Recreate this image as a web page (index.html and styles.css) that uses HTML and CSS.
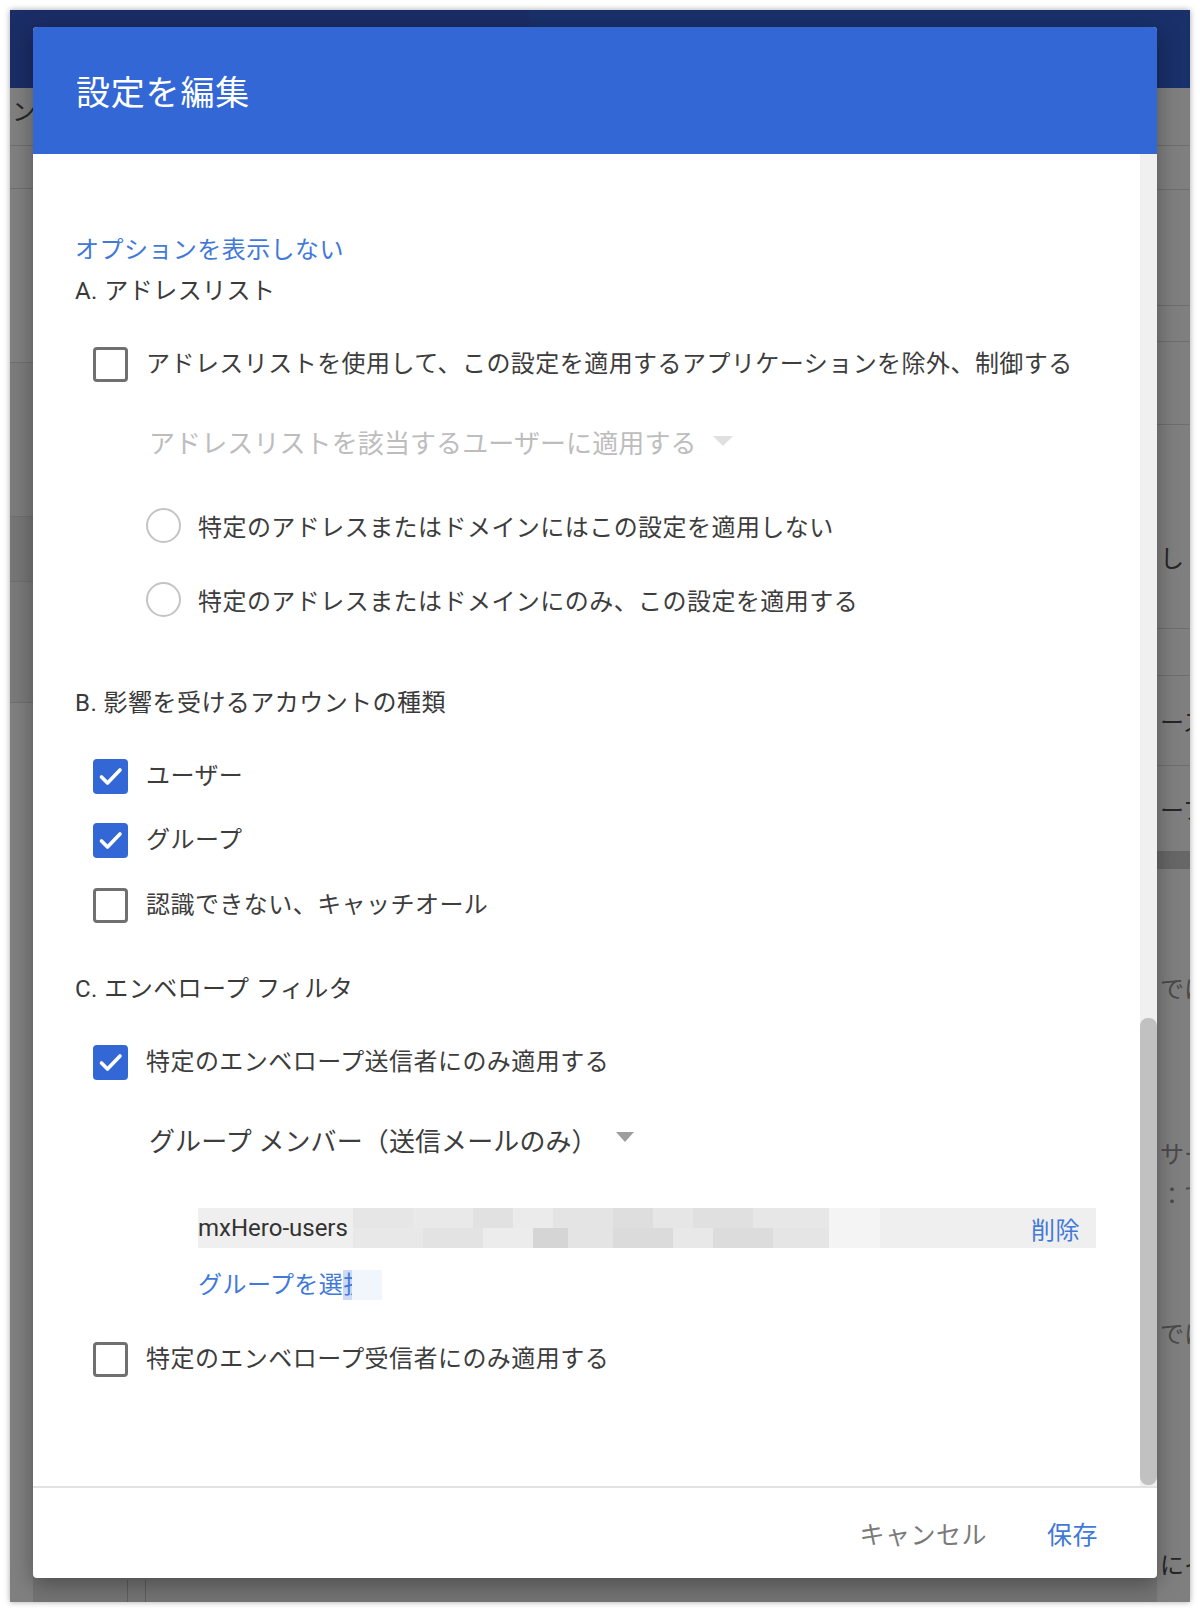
FILE: index.html
```html
<!DOCTYPE html>
<html lang="ja">
<head>
<meta charset="utf-8">
<title>設定を編集</title>
<link rel="stylesheet" href="styles.css">
</head>
<body>
<div class="frame">
  <div class="backdrop">
    <div class="topbar"><div class="tb-left"></div><div class="tb-right"></div></div>
    <div class="bd-main">
      <div class="strip strip-left">
        <div class="cell l1"><span class="bgtext">ン</span></div>
        <div class="cell l2"></div>
        <div class="cell l3"></div>
        <div class="cell l4"></div>
        <div class="cell l5"></div>
        <div class="cell l6"></div>
      </div>
      <div class="bd-mid">
        <div class="dbl"></div>
      </div>
      <div class="strip strip-right">
        <div class="cell r1 line"></div>
        <div class="cell r2 line"></div>
        <div class="cell r3 line"></div>
        <div class="cell r4 line"></div>
        <div class="cell r5 line"></div>
        <div class="cell r6"></div>
        <div class="cell r7"><span class="bgtext">し：</span></div>
        <div class="cell r8 line"></div>
        <div class="cell r9 line"></div>
        <div class="cell r10 line"><span class="bgtext">ース</span></div>
        <div class="cell r11"><span class="bgtext">ーフ</span></div>
        <div class="cell r12 dark"></div>
        <div class="cell r13"></div>
        <div class="cell r14"><span class="bgtext faint">でに</span></div>
        <div class="cell r15"></div>
        <div class="cell r16"><span class="bgtext faint">サー</span></div>
        <div class="cell r17"><span class="bgtext faint">：で</span></div>
        <div class="cell r18"></div>
        <div class="cell r19"><span class="bgtext faint">でに</span></div>
        <div class="cell r20"></div>
        <div class="cell r21"><span class="bgtext">にイ</span></div>
      </div>
    </div>
  </div>

  <div class="dialog">
    <header class="dlg-head"><h1>設定を編集</h1></header>
    <div class="dlg-body">
      <div class="dlg-content">
        <a class="link row-line">オプションを表示しない</a>
        <div class="heading row-line m1">A. アドレスリスト</div>

        <div class="cb-row row-line m33">
          <span class="cb"></span>
          <span class="label">アドレスリストを使用して、この設定を適用するアプリケーションを除外、制御する</span>
        </div>

        <div class="select disabled row-line m40">
          <span>アドレスリストを該当するユーザーに適用する</span><span class="caret"></span>
        </div>

        <div class="radio-row row-line m44">
          <span class="radio"></span>
          <span class="label">特定のアドレスまたはドメインにはこの設定を適用しない</span>
        </div>
        <div class="radio-row row-line m34">
          <span class="radio"></span>
          <span class="label">特定のアドレスまたはドメインにのみ、この設定を適用する</span>
        </div>

        <div class="heading row-line m61">B. 影響を受けるアカウントの種類</div>

        <div class="cb-row row-line m33">
          <span class="cb checked"><svg viewBox="0 0 35 35" width="35" height="35"><path d="M8.5 18 L14.5 24 L27 11" fill="none" stroke="#fff" stroke-width="3.6" stroke-linecap="round" stroke-linejoin="round"/></svg></span>
          <span class="label">ユーザー</span>
        </div>
        <div class="cb-row row-line m24">
          <span class="cb checked"><svg viewBox="0 0 35 35" width="35" height="35"><path d="M8.5 18 L14.5 24 L27 11" fill="none" stroke="#fff" stroke-width="3.6" stroke-linecap="round" stroke-linejoin="round"/></svg></span>
          <span class="label">グループ</span>
        </div>
        <div class="cb-row row-line m25">
          <span class="cb"></span>
          <span class="label">認識できない、キャッチオール</span>
        </div>

        <div class="heading row-line m44">C. エンベロープ フィルタ</div>

        <div class="cb-row row-line m33">
          <span class="cb checked"><svg viewBox="0 0 35 35" width="35" height="35"><path d="M8.5 18 L14.5 24 L27 11" fill="none" stroke="#fff" stroke-width="3.6" stroke-linecap="round" stroke-linejoin="round"/></svg></span>
          <span class="label">特定のエンベロープ送信者にのみ適用する</span>
        </div>

        <div class="select row-line m40">
          <span>グループ メンバー（送信メールのみ）</span><span class="caret dark-caret"></span>
        </div>

        <div class="group-row m46">
          <span class="group-name">mxHero-users</span>
          <span class="redact"></span>
          <span class="redact-light"></span>
          <span class="grow"></span>
          <a class="link remove">削除</a>
        </div>

        <a class="link pick row-line m17">グループを選<span class="sel-clip">択</span><span class="sel-pale"></span></a>

        <div class="cb-row row-line m34">
          <span class="cb"></span>
          <span class="label">特定のエンベロープ受信者にのみ適用する</span>
        </div>
      </div>
      <div class="scroll-track"><div class="scroll-thumb"></div></div>
    </div>
    <footer class="dlg-foot">
      <button class="btn cancel">キャンセル</button>
      <button class="btn save">保存</button>
    </footer>
  </div>
</div>
</body>
</html>
```

FILE: styles.css
```css
* { box-sizing: border-box; }

html, body {
  margin: 0;
  padding: 0;
  background: #ffffff;
}

body {
  font-family: "Roboto", "Noto Sans CJK JP", sans-serif;
  width: 1200px;
  height: 1612px;
  overflow: hidden;
}

.frame {
  position: relative;
  width: 1180px;
  height: 1592px;
  margin: 10px 0 0 10px;
  overflow: hidden;
  box-shadow: 0 0 6px rgba(0, 0, 0, 0.35);
}

/* ---------- dimmed backdrop ---------- */
.backdrop {
  display: flex;
  flex-direction: column;
  height: 100%;
  background: #7e7e7e;
}

.topbar {
  display: flex;
  height: 78px;
}
.tb-left { width: 520px; background: #1b2d66; }
.tb-right { flex: 1; background: #19306a; }

.bd-main {
  flex: 1;
  display: flex;
}

.strip {
  display: flex;
  flex-direction: column;
  overflow: hidden;
}
.strip-left { width: 23px; background: #808080; }
.strip-right { width: 33px; background: #7f7f7f; }

.bd-mid {
  flex: 1;
  display: flex;
  flex-direction: column;
  justify-content: flex-end;
  background: #747474;
}

.dbl {
  width: 19px;
  height: 22px;
  margin-left: 94px;
  border-left: 1px solid #5e5e5e;
  border-right: 1px solid #5e5e5e;
}

.cell {
  display: flex;
  align-items: center;
  flex-shrink: 0;
  white-space: nowrap;
}
.strip-left .cell { border-bottom: 1px solid #6f6f6f; }
.cell.line { border-bottom: 1px solid #6e6e6e; }
.cell.dark { background: #676767; }

.l1 { height: 58px; align-items: flex-start; }
.l1 .bgtext { line-height: 44px; padding-left: 2px; }
.l2 { height: 43px; }
.l3 { height: 174px; }
.l4 { height: 154px; background: #7c7c7c; }
.l5 { height: 65px; background: #767676; }
.l6 { height: 121px; background: #7a7a7a; }

.r1 { height: 58px; }
.r2 { height: 44px; }
.r3 { height: 116px; }
.r4 { height: 36px; }
.r5 { height: 83px; }
.r6 { height: 95px; }
.r7 { height: 72px; }
.r8 { height: 37px; }
.r9 { height: 47px; }
.r10 { height: 90px; }
.r11 { height: 85px; }
.r12 { height: 18px; }
.r13 { height: 91px; }
.r14 { height: 54px; }
.r15 { height: 116px; }
.r16 { height: 44px; }
.r17 { height: 38px; }
.r18 { height: 98px; }
.r19 { height: 44px; }
.r20 { height: 186px; }
.r21 { height: 46px; }

.strip-right .bgtext { padding-left: 3px; }

.bgtext {
  font-size: 24px;
  color: #262626;
  font-family: "Noto Sans CJK JP", sans-serif;
}
.bgtext.faint { color: #4a4a4a; }

/* ---------- dialog ---------- */
.dialog {
  position: absolute;
  left: 23px;
  top: 17px;
  width: 1124px;
  height: 1551px;
  background: #ffffff;
  border-radius: 4px;
  overflow: hidden;
  display: flex;
  flex-direction: column;
  box-shadow: 0 6px 22px rgba(0, 0, 0, 0.35);
}

.dlg-head {
  height: 127px;
  flex-shrink: 0;
  background: #3367d6;
  display: flex;
  align-items: center;
  padding-left: 43px;
}
.dlg-head h1 {
  margin: 0;
  font-size: 34px;
  font-weight: 400;
  color: #ffffff;
  letter-spacing: 0.8px;
  font-family: "Noto Sans CJK JP", sans-serif;
}

.dlg-body {
  flex: 1;
  display: flex;
  min-height: 0;
}

.dlg-content {
  flex: 1;
  padding: 76px 44px 0 42px;
  display: flex;
  flex-direction: column;
  align-items: flex-start;
  font-size: 24px;
  letter-spacing: 0.45px;
  color: #3d3d3d;
}

.row-line {
  height: 40px;
  line-height: 40px;
  display: flex;
  align-items: center;
  white-space: nowrap;
}

.m1 { margin-top: 1px; }
.m17 { margin-top: 17px; }
.m24 { margin-top: 24px; }
.m25 { margin-top: 25px; }
.m33 { margin-top: 33px; }
.m34 { margin-top: 34px; }
.m40 { margin-top: 40px; }
.m44 { margin-top: 44px; }
.m46 { margin-top: 46px; }
.m61 { margin-top: 61px; }

.link {
  color: #4179d8;
  text-decoration: none;
  cursor: pointer;
}

.heading { color: #3a3a3a; }

.cb-row { padding-left: 18px; }
.cb {
  width: 35px;
  height: 35px;
  flex-shrink: 0;
  border: 3px solid #707070;
  border-radius: 4px;
  margin-right: 18px;
  display: flex;
  align-items: center;
  justify-content: center;
}
.cb.checked {
  border: none;
  background: #3367d6;
}
.cb svg { display: block; }

.radio-row { padding-left: 71px; }
.radio {
  width: 35px;
  height: 35px;
  flex-shrink: 0;
  border: 2px solid #c4c4c4;
  border-radius: 50%;
  margin-right: 17px;
  margin-top: -5px;
}

.select {
  padding-left: 74px;
  color: #3d3d3d;
  font-size: 26px;
  letter-spacing: 0.1px;
}
.select.disabled { color: #bdbdbd; }
.caret {
  width: 0;
  height: 0;
  border-left: 10px solid transparent;
  border-right: 10px solid transparent;
  border-top: 10px solid #e0e0e0;
  margin-left: 16px;
  margin-bottom: 6px;
}
.caret.dark-caret {
  border-left-width: 9px;
  border-right-width: 9px;
  border-top-color: #9e9e9e;
  margin-left: 18px;
  margin-bottom: 10px;
}

.group-row {
  align-self: stretch;
  margin-left: 123px;
  height: 40px;
  background: #efefef;
  display: flex;
  align-items: center;
}
.group-name {
  font-family: "Roboto", sans-serif;
  letter-spacing: 0;
  color: #333333;
  font-size: 24px;
  width: 155px;
  white-space: nowrap;
}
.redact {
  width: 476px;
  height: 40px;
  background:
    linear-gradient(to right,
      #e6e6e6 0 60px, #e9e9e9 60px 120px, #e1e1e1 120px 160px, #ebebeb 160px 200px,
      #e4e4e4 200px 260px, #dedede 260px 300px, #e6e6e6 300px 340px, #e0e0e0 340px 400px,
      #e7e7e7 400px 476px) top left / 100% 50% no-repeat,
    linear-gradient(to right,
      #e8e8e8 0 70px, #e3e3e3 70px 130px, #ececec 130px 180px, #d5d5d5 180px 215px,
      #e4e4e4 215px 260px, #dbdbdb 260px 320px, #e8e8e8 320px 360px, #dcdcdc 360px 420px,
      #e5e5e5 420px 476px) bottom left / 100% 50% no-repeat;
}
.redact-light {
  width: 51px;
  height: 40px;
  background: #f4f4f4;
}
.grow { flex: 1; }
.remove {
  padding-right: 16px;
  font-size: 24px;
}

.pick { margin-left: 123px; }
.sel-clip {
  display: inline-block;
  width: 9px;
  height: 30px;
  line-height: 30px;
  overflow: hidden;
  background: #cddaf5;
}
.sel-pale {
  display: inline-block;
  width: 30px;
  height: 30px;
  background: #f1f5fc;
}

.scroll-track {
  width: 17px;
  flex-shrink: 0;
  background: #f0f0f0;
  padding-top: 864px;
}
.scroll-thumb {
  width: 17px;
  height: 467px;
  background: #c1c1c1;
  border-radius: 8px;
}

.dlg-foot {
  height: 92px;
  flex-shrink: 0;
  border-top: 2px solid #e2e2e2;
  display: flex;
  justify-content: flex-end;
  align-items: center;
  gap: 60px;
  padding: 0 59px 0 0;
}
.btn {
  border: none;
  background: none;
  padding: 0;
  font-family: "Noto Sans CJK JP", sans-serif;
  font-size: 25px;
  letter-spacing: 0.5px;
  cursor: pointer;
}
.btn.cancel { color: #7a7a7a; }
.btn.save { color: #4179d8; }
```
